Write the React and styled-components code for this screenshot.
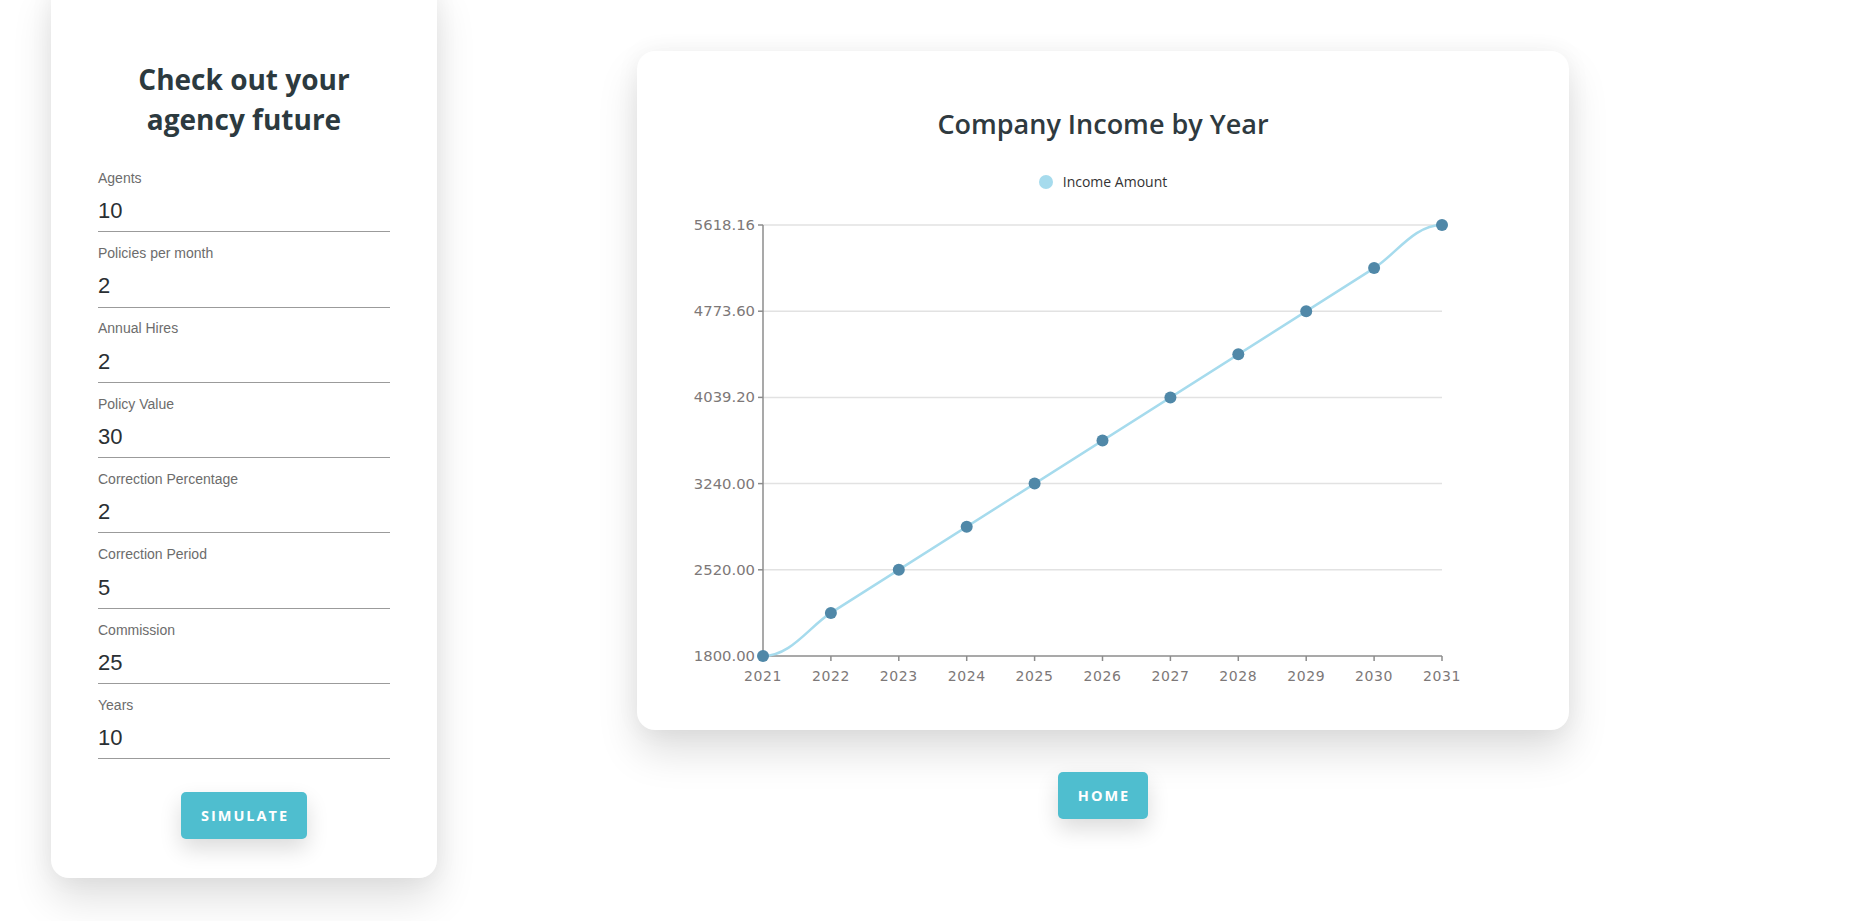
import styled, { createGlobalStyle } from "styled-components";

const GlobalStyle = createGlobalStyle`
  html, body {
    margin: 0;
    padding: 0;
    background: #ffffff;
    overflow: hidden;
  }
  * {
    box-sizing: border-box;
  }
`;

const Page = styled.div`
  display: flex;
  align-items: flex-start;
  gap: 200px;
  padding-left: 51px;
  margin-top: -20px;
  width: 1853px;
  height: 941px;
`;

const FormCard = styled.div`
  width: 386px;
  display: flex;
  flex-direction: column;
  padding: 79px 47px 39px;
  background: #ffffff;
  border-radius: 18px;
  box-shadow: 0 22px 40px rgba(0, 0, 0, 0.12), 0 0 24px rgba(0, 0, 0, 0.05);
`;

const FormTitle = styled.h2`
  margin: 0 0 18px;
  font-family: "Open Sans", "Noto Sans", sans-serif;
  font-weight: 700;
  font-size: 28px;
  line-height: 40px;
  text-align: center;
  color: #2c3a3f;
`;

const Field = styled.label`
  display: flex;
  flex-direction: column;
  padding-top: 12.8px;
`;

const FieldLabel = styled.span`
  font-family: "Liberation Sans", Arial, sans-serif;
  font-size: 14px;
  line-height: 17px;
  color: #6c6c6c;
`;

const FieldInput = styled.input`
  height: 45.5px;
  padding: 4px 0 0;
  border: none;
  border-bottom: 1.5px solid #9b9b9b;
  outline: none;
  background: transparent;
  font-family: "Liberation Sans", Arial, sans-serif;
  font-size: 22px;
  color: #2a2f33;
`;

const ActionButton = styled.button`
  align-self: center;
  height: 47px;
  margin-top: ${(props) => props.$top || 0}px;
  padding: 0 18px 0 20px;
  border: none;
  border-radius: 5px;
  background: #4fbecf;
  color: #ffffff;
  font-family: "Open Sans", "Noto Sans", sans-serif;
  font-weight: 700;
  font-size: 14.5px;
  letter-spacing: 2px;
  text-transform: uppercase;
  box-shadow: 0 10px 22px rgba(0, 0, 0, 0.14);
  cursor: pointer;
`;

const ChartColumn = styled.div`
  display: flex;
  flex-direction: column;
  align-items: center;
  margin-top: 71px;
`;

const ChartCard = styled.div`
  width: 932px;
  display: flex;
  flex-direction: column;
  align-items: center;
  padding: 54px 0 30px;
  background: #ffffff;
  border-radius: 18px;
  box-shadow: 0 22px 40px rgba(0, 0, 0, 0.13), 0 0 24px rgba(0, 0, 0, 0.05);
`;

const ChartTitle = styled.h3`
  margin: 0;
  font-family: "Open Sans", "Noto Sans", sans-serif;
  font-weight: 600;
  font-size: 27px;
  line-height: 38px;
  color: #2f3a3f;
`;

const Legend = styled.div`
  display: flex;
  align-items: center;
  gap: 10px;
  margin-top: 29px;
  font-family: "Open Sans", "Noto Sans", sans-serif;
  font-size: 14px;
  line-height: 20px;
  color: #333333;
`;

const LegendDot = styled.span`
  width: 14px;
  height: 14px;
  border-radius: 50%;
  background: #a6dbed;
`;

const ChartSvg = styled.svg`
  display: block;
  margin-top: 3px;
`;

const fields = [
  { label: "Agents", value: "10" },
  { label: "Policies per month", value: "2" },
  { label: "Annual Hires", value: "2" },
  { label: "Policy Value", value: "30" },
  { label: "Correction Percentage", value: "2" },
  { label: "Correction Period", value: "5" },
  { label: "Commission", value: "25" },
  { label: "Years", value: "10" },
];

const years = [2021, 2022, 2023, 2024, 2025, 2026, 2027, 2028, 2029, 2030, 2031];
const yTicks = ["1800.00", "2520.00", "3240.00", "4039.20", "4773.60", "5618.16"];

// plot area inside the svg
const left = 126;
const right = 805;
const top = 30;
const bottom = 461;
const stepX = (right - left) / 10;
const stepY = (bottom - top) / 10;

function IncomeChart() {
  const points = years.map((year, i) => ({
    year,
    x: left + i * stepX,
    y: bottom - i * stepY,
  }));
  const p = points;
  const dx = 22;
  const dy = (dx * stepY) / stepX;
  const path =
    `M${p[0].x},${p[0].y} ` +
    `C${p[0].x + 28},${p[0].y} ${p[1].x - dx},${p[1].y + dy} ${p[1].x},${p[1].y} ` +
    `L${p[9].x},${p[9].y} ` +
    `C${p[9].x + dx},${p[9].y - dy} ${p[10].x - 28},${p[10].y} ${p[10].x},${p[10].y}`;

  return (
    <ChartSvg width="932" height="505" viewBox="0 0 932 505">
      {yTicks.map((label, i) => {
        const y = bottom - i * 2 * stepY;
        return (
          <g key={label}>
            {i > 0 && (
              <line x1={left} x2={right} y1={y} y2={y} stroke="#e2e2e2" strokeWidth="1.5" />
            )}
            <line x1={left - 5} x2={left} y1={y} y2={y} stroke="#8c8c8c" strokeWidth="1.5" />
            <text
              x={left - 8}
              y={y + 5}
              textAnchor="end"
              fontFamily="DejaVu Sans, sans-serif"
              fontSize="14.8"
              fill="#7d7878"
            >
              {label}
            </text>
          </g>
        );
      })}
      <line x1={left} x2={left} y1={top} y2={bottom} stroke="#8c8c8c" strokeWidth="1.5" />
      <line x1={left} x2={right} y1={bottom} y2={bottom} stroke="#8c8c8c" strokeWidth="1.5" />
      {points.map((pt) => (
        <g key={pt.year}>
          <line x1={pt.x} x2={pt.x} y1={bottom} y2={bottom + 5} stroke="#8c8c8c" strokeWidth="1.5" />
          <text
            x={pt.x}
            y={bottom + 25}
            textAnchor="middle"
            fontFamily="DejaVu Sans, sans-serif"
            fontSize="14"
            letterSpacing="0.6"
            fill="#7d7878"
          >
            {pt.year}
          </text>
        </g>
      ))}
      <path d={path} fill="none" stroke="#a6dbed" strokeWidth="2.5" />
      {points.map((pt) => (
        <circle key={pt.year} cx={pt.x} cy={pt.y} r="6" fill="#5088a8" />
      ))}
    </ChartSvg>
  );
}

export default function App() {
  return (
    <>
      <GlobalStyle />
      <Page>
        <FormCard>
          <FormTitle>
            Check out your
            <br />
            agency future
          </FormTitle>
          {fields.map((field) => (
            <Field key={field.label}>
              <FieldLabel>{field.label}</FieldLabel>
              <FieldInput type="text" defaultValue={field.value} />
            </Field>
          ))}
          <ActionButton $top={33}>Simulate</ActionButton>
        </FormCard>

        <ChartColumn>
          <ChartCard>
            <ChartTitle>Company Income by Year</ChartTitle>
            <Legend>
              <LegendDot />
              Income Amount
            </Legend>
            <IncomeChart />
          </ChartCard>
          <ActionButton $top={42}>Home</ActionButton>
        </ChartColumn>
      </Page>
    </>
  );
}
